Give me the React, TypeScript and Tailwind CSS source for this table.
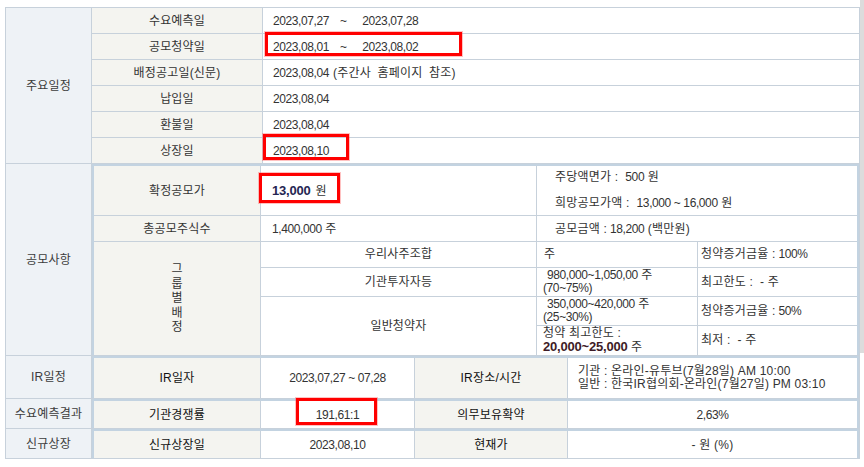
import React from 'react';

// numbers in the reference are set tighter than the hangul
function N({ children }: { children: React.ReactNode }) {
    return <span className="tracking-[-0.4px]">{children}</span>;
}

const schedule: [string, React.ReactNode][] = [
    [
        '수요예측일',
        <>
            <N>2023,07,27</N>
            <span className="ml-[11px] mr-[15px]">~</span>
            <N>2023,07,28</N>
        </>,
    ],
    [
        '공모청약일',
        <>
            <N>2023,08,01</N>
            <span className="ml-[11px] mr-[15px]">~</span>
            <N>2023,08,02</N>
        </>,
    ],
    [
        '배정공고일(신문)',
        <>
            <N>2023,08,04</N>
            <span className="ml-[4px] [word-spacing:3px]">(주간사 홈페이지 참조)</span>
        </>,
    ],
    ['납입일', <N>2023,08,04</N>],
    ['환불일', <N>2023,08,04</N>],
    ['상장일', <N>2023,08,10</N>],
];

function Label({ children }: { children: React.ReactNode }) {
    return (
        <div className="w-[86px] shrink-0 flex items-center justify-center bg-[#eef2f6] border-r border-[#c7d1db] text-[#3c3c3c]">
            {children}
        </div>
    );
}

// red annotation boxes drawn over the table
function Mark({ className }: { className: string }) {
    return (
        <div
            className={
                'absolute border-[3px] border-[#ff0000] shadow-[0_0_0_1px_rgba(255,80,80,0.35)] ' + className
            }
        />
    );
}

function Bottom({
    label,
    value,
    label2,
    value2,
    height,
}: {
    label: string;
    value: React.ReactNode;
    label2: string;
    value2: React.ReactNode;
    height: string;
}) {
    return (
        <div className={'flex border-b border-[#c7d1db] ' + height}>
            <div className="flex-1 flex border-x-2 border-t-2 border-[#c3d3e1]">
                <div className="w-[167px] shrink-0 flex items-center justify-center bg-[#f4f4f0] border-r border-[#c7d1db] text-[#111]">
                    {label}
                </div>
                <div className="w-[154px] shrink-0 flex items-center justify-center border-r border-[#c7d1db]">
                    {value}
                </div>
                <div className="w-[153px] shrink-0 flex items-center justify-center bg-[#f4f4f0] border-r border-[#c7d1db] text-[#111]">
                    {label2}
                </div>
                <div className="flex-1 flex items-center">{value2}</div>
            </div>
        </div>
    );
}

export default function App() {
    return (
        <div className="relative flex items-start w-[864px] h-[467px] overflow-hidden bg-white font-['Liberation_Sans','Noto_Sans_CJK_KR',sans-serif] text-[12px] tracking-[0.2px] text-[#333]">
            <div className="pl-[5px] pt-[7px]">
                <div className="w-[855px] border-x border-t border-[#c7d1db]">
                    {/* 주요일정 */}
                    <div className="flex border-b border-[#c7d1db]">
                        <Label>주요일정</Label>
                        <div className="flex-1">
                            {schedule.map(([k, v], i) => (
                                <div
                                    key={k}
                                    className={
                                        'grid grid-cols-[171px_1fr] ' +
                                        (i < 5 ? 'h-[26px] border-b border-[#c7d1db]' : 'h-[25px]')
                                    }
                                >
                                    <div className="flex items-center justify-center bg-[#f4f4f0] border-r border-[#c7d1db]">
                                        {k}
                                    </div>
                                    <div className="flex items-center pl-[10px]">{v}</div>
                                </div>
                            ))}
                        </div>
                    </div>

                    {/* 공모사항 */}
                    <div className="flex h-[192px] border-b border-[#c7d1db]">
                        <Label>공모사항</Label>
                        <div className="flex-1 flex flex-col border-x-2 border-t-2 border-[#c3d3e1]">
                            <div className="flex h-[50px] shrink-0 border-b border-[#c7d1db]">
                                <div className="w-[167px] shrink-0 flex items-center justify-center bg-[#f4f4f0] border-r border-[#c7d1db]">
                                    확정공모가
                                </div>
                                <div className="w-[276px] shrink-0 flex items-center pl-[11px] border-r border-[#c7d1db]">
                                    <b className="text-[13px] tracking-[-0.2px] text-[#252552]">13,000</b>
                                    <span className="ml-[5px]">원</span>
                                </div>
                                <div className="flex-1 flex flex-col justify-center gap-[13px] pl-[18px] leading-[13px]">
                                    <div>
                                        주당액면가 :&nbsp; <N>500</N> 원
                                    </div>
                                    <div>
                                        희망공모가액 :&nbsp; <N>13,000 ~ 16,000</N> 원
                                    </div>
                                </div>
                            </div>
                            <div className="flex h-[26px] shrink-0 border-b border-[#c7d1db]">
                                <div className="w-[167px] shrink-0 flex items-center justify-center bg-[#f4f4f0] border-r border-[#c7d1db]">
                                    총공모주식수
                                </div>
                                <div className="w-[276px] shrink-0 flex items-center pl-[11px] border-r border-[#c7d1db]">
                                    <N>1,400,000</N>&nbsp;주
                                </div>
                                <div className="flex-1 flex items-center pl-[18px]">
                                    공모금액 : <N>&nbsp;18,200</N>&nbsp;(백만원)
                                </div>
                            </div>
                            <div className="flex flex-1">
                                <div className="w-[167px] shrink-0 flex flex-col items-center justify-center bg-[#f4f4f0] border-r border-[#c7d1db] leading-[14.5px]">
                                    <span>그</span>
                                    <span>룹</span>
                                    <span>별</span>
                                    <span>배</span>
                                    <span>정</span>
                                </div>
                                <div className="flex-1 grid grid-cols-[276px_161px_1fr] grid-rows-[26px_29px_29px_29px] leading-[13px]">
                                    <div className="flex items-center justify-center border-r border-b border-[#c7d1db]">
                                        우리사주조합
                                    </div>
                                    <div className="flex items-center pl-[7px] border-r border-b border-[#c7d1db]">주</div>
                                    <div className="flex items-center pl-[3px] border-b border-[#c7d1db]">
                                        청약증거금율 : <N>&nbsp;100%</N>
                                    </div>

                                    <div className="flex items-center justify-center border-r border-b border-[#c7d1db]">
                                        기관투자자등
                                    </div>
                                    <div className="flex flex-col justify-center pl-[6px] border-r border-b border-[#c7d1db]">
                                        <span className="pl-[4px]">
                                            <N>980,000~1,050,00</N> 주
                                        </span>
                                        <N>(70~75%)</N>
                                    </div>
                                    <div className="flex items-center pl-[3px] border-b border-[#c7d1db]">
                                        최고한도 :&nbsp; - 주
                                    </div>

                                    <div className="row-span-2 flex items-center justify-center border-r border-[#c7d1db]">
                                        일반청약자
                                    </div>
                                    <div className="flex flex-col justify-center pl-[6px] border-r border-b border-[#c7d1db]">
                                        <span className="pl-[4px]">
                                            <N>350,000~420,000</N> 주
                                        </span>
                                        <N>(25~30%)</N>
                                    </div>
                                    <div className="flex items-center pl-[3px] border-b border-[#c7d1db]">
                                        청약증거금율 : <N>&nbsp;50%</N>
                                    </div>

                                    <div className="flex flex-col justify-center pl-[6px] border-r border-[#c7d1db]">
                                        <span>청약 최고한도 :</span>
                                        <span>
                                            <b className="text-[13px] tracking-[-0.2px] text-[#3e1b26]">20,000~25,000</b> 주
                                        </span>
                                    </div>
                                    <div className="flex items-center pl-[3px]">최저 :&nbsp; - 주</div>
                                </div>
                            </div>
                        </div>
                    </div>

                    {/* IR일정 */}
                    <div className="flex h-[43px]">
                        <div className="w-[86px] shrink-0 flex items-center justify-center bg-[#eef2f6] border-r border-b border-[#c7d1db] text-[#3c3c3c]">
                            IR일정
                        </div>
                        <div className="flex-1">
                            <Bottom
                                height="h-[43px]"
                                label="IR일자"
                                value={<N>2023,07,27 ~ 07,28</N>}
                                label2="IR장소/시간"
                                value2={
                                    <div className="flex flex-col pl-[10px] leading-[13px]">
                                        <span>기관 : 온라인-유투브(7월28일) AM 10:00</span>
                                        <span>일반 : 한국IR협의회-온라인(7월27일) PM 03:10</span>
                                    </div>
                                }
                            />
                        </div>
                    </div>

                    {/* 수요예측결과 */}
                    <div className="flex h-[30px]">
                        <div className="w-[86px] shrink-0 flex items-center justify-center bg-[#eef2f6] border-r border-b border-[#c7d1db] text-[#3c3c3c]">
                            수요예측결과
                        </div>
                        <div className="flex-1">
                            <Bottom
                                height="h-[30px]"
                                label="기관경쟁률"
                                value={<N>191,61:1</N>}
                                label2="의무보유확약"
                                value2={
                                    <span className="w-full text-center">
                                        <N>2,63%</N>
                                    </span>
                                }
                            />
                        </div>
                    </div>

                    {/* 신규상장 */}
                    <div className="flex h-[30px]">
                        <div className="w-[86px] shrink-0 flex items-center justify-center bg-[#eef2f6] border-r border-b border-[#c7d1db] text-[#3c3c3c]">
                            신규상장
                        </div>
                        <div className="flex-1">
                            <Bottom
                                height="h-[30px]"
                                label="신규상장일"
                                value={<N>2023,08,10</N>}
                                label2="현재가"
                                value2={<span className="w-full text-center">- 원 (%)</span>}
                            />
                        </div>
                    </div>
                </div>
            </div>
            <div className="w-[4px] h-[353px] bg-[#dcdcdc]" />

            <Mark className="left-[265px] top-[32px] w-[197px] h-[24px]" />
            <Mark className="left-[263px] top-[134px] w-[86px] h-[26px]" />
            <Mark className="left-[259px] top-[173px] w-[81px] h-[30px]" />
            <Mark className="left-[296px] top-[398px] w-[81px] h-[27px]" />
        </div>
    );
}
